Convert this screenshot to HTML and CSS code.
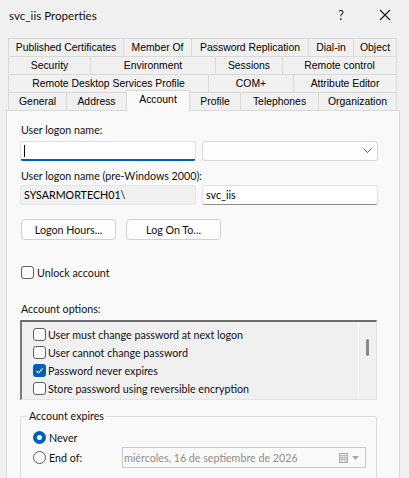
FILE: index.html
```html
<!DOCTYPE html>
<html lang="en">
<head>
    <meta charset="UTF-8">
    <meta name="viewport" content="width=device-width, initial-scale=1.0">
    <title>svc_iis Properties</title>
    <link rel="stylesheet" href="styles.css">
</head>
<body>
    <div class="dialog">
        <div class="titlebar">
            <span class="title">svc_iis Properties</span>
            <span class="help">?</span>
            <span class="close">
                <svg width="12" height="12" viewBox="0 0 12 12"><path d="M1 1L11 11M11 1L1 11" stroke="#1b1b1b" stroke-width="1.1" fill="none"/></svg>
            </span>
        </div>

        <div class="tabs">
            <div class="tab-row row-1">
                <div class="tab">Published Certificates</div>
                <div class="tab">Member Of</div>
                <div class="tab">Password Replication</div>
                <div class="tab">Dial-in</div>
                <div class="tab">Object</div>
            </div>
            <div class="tab-row row-2">
                <div class="tab">Security</div>
                <div class="tab">Environment</div>
                <div class="tab">Sessions</div>
                <div class="tab">Remote control</div>
            </div>
            <div class="tab-row row-3">
                <div class="tab">Remote Desktop Services Profile</div>
                <div class="tab">COM+</div>
                <div class="tab">Attribute Editor</div>
            </div>
            <div class="tab-row row-4">
                <div class="tab">General</div>
                <div class="tab">Address</div>
                <div class="tab active">Account</div>
                <div class="tab">Profile</div>
                <div class="tab">Telephones</div>
                <div class="tab">Organization</div>
            </div>
        </div>

        <div class="panel">
            <div class="label">User logon name:</div>
            <div class="field-row">
                <div class="textbox focused"><span class="caret"></span></div>
                <div class="combo">
                    <svg width="9" height="6" viewBox="0 0 9 6"><path d="M0.5 0.5L4.5 4.5L8.5 0.5" stroke="#5c5c5c" stroke-width="1" fill="none"/></svg>
                </div>
            </div>

            <div class="label label-2">User logon name (pre-Windows 2000):</div>
            <div class="field-row row-pre">
                <div class="textbox readonly">SYSARMORTECH01\</div>
                <div class="textbox">svc_iis</div>
            </div>

            <div class="buttons">
                <button class="btn">Logon Hours...</button>
                <button class="btn">Log On To...</button>
            </div>

            <div class="check-row unlock">
                <span class="check"></span>
                <span>Unlock account</span>
            </div>

            <div class="label options-label">Account options:</div>
            <div class="listbox">
                <div class="options">
                    <div class="check-row item"><span class="check"></span><span>User must change password at next logon</span></div>
                    <div class="check-row item"><span class="check"></span><span>User cannot change password</span></div>
                    <div class="check-row item">
                        <span class="check checked">
                            <svg width="13" height="13" viewBox="0 0 13 13"><path d="M3.5 6.8L5.6 8.8L9.6 4.4" stroke="#fff" stroke-width="1.1" fill="none"/></svg>
                        </span>
                        <span>Password never expires</span>
                    </div>
                    <div class="check-row item"><span class="check"></span><span>Store password using reversible encryption</span></div>
                </div>
                <div class="scroll"><span class="thumb"></span></div>
            </div>

            <fieldset class="expires">
                <legend>Account expires</legend>
                <div class="radio-row">
                    <span class="radio on"></span>
                    <span>Never</span>
                </div>
                <div class="radio-row end-row">
                    <span class="radio"></span>
                    <span class="end-label">End of:</span>
                    <div class="datepicker">
                        <span>miércoles, 16 de septiembre de 2026</span>
                        <span class="picker-icons">
                            <svg width="9" height="10" viewBox="0 0 9 10">
                                <rect x="0.5" y="0.5" width="8" height="9" fill="#f4f4f4" stroke="#a8a8a8"/>
                                <path d="M0.5 2.5H8.5M0.5 4.5H8.5M0.5 6.5H8.5M3 2.5V9.5M6 2.5V9.5" stroke="#b8b8b8" stroke-width="1" fill="none"/>
                            </svg>
                            <svg width="7" height="4" viewBox="0 0 7 4"><path d="M0 0H7L3.5 4Z" fill="#a8a8a8"/></svg>
                        </span>
                    </div>
                </div>
            </fieldset>
        </div>
    </div>
</body>
</html>
```
FILE: styles.css
```css
body {
    margin: 0;
    width: 409px;
    height: 478px;
    overflow: hidden;
    background-color: #f0f0f0;
    font-family: Lato, "Noto Sans", sans-serif;
    font-size: 10.7px;
    color: #111;
}

.titlebar {
    height: 30px;
    display: flex;
    align-items: center;
    padding-left: 9px;
}

.title {
    flex: 1;
    font-size: 11.6px;
}

.help {
    font-size: 12.5px;
    width: 14px;
    margin-right: 31px;
    text-align: center;
}

.close {
    display: flex;
    margin-right: 18px;
}

/* tab strip: four stacked rows, widths fixed per row */
.tabs {
    margin: 8px 0 0 8px;
    width: 389px;
    font-family: "Liberation Sans", Arial, sans-serif;
    font-size: 10.4px;
    color: #000;
}

.tab-row {
    display: grid;
    height: 18px;
}

.row-1 { grid-template-columns: 115px 68px 117px 45px 44px; }
.row-2 { grid-template-columns: 82px 125px 67px 115px; }
.row-3 { grid-template-columns: 200px 85px 104px; }
.row-4 { grid-template-columns: 58px 60px 64px 50px 78px 79px; }

.tab {
    height: 18px;
    box-sizing: border-box;
    border-top: 1px solid #d9d9d9;
    border-left: 1px solid #d9d9d9;
    text-align: center;
    line-height: 17px;
    white-space: nowrap;
    background-color: #f0f0f0;
}

.tab:last-child {
    border-right: 1px solid #d9d9d9;
}

.tab.active {
    position: relative;
    top: -2px;
    height: 21px;
    z-index: 1;
    background-color: #f9f9f9;
    border-right: 1px solid #d9d9d9;
    line-height: 18px;
}

.tab.active + .tab {
    border-left: none;
}

/* the page runs on below the window, so no bottom edge */
.panel {
    margin-left: 6px;
    width: 394px;
    height: 368px;
    box-sizing: border-box;
    border: 1px solid #d9d9d9;
    border-bottom: none;
    background-color: #f9f9f9;
    padding: 12px 0 0 13px;
}

.label {
    line-height: 14px;
    padding-left: 1px;
}

.label-2 {
    margin-top: 8px;
}

.field-row {
    display: flex;
    gap: 6px;
    margin-top: 4px;
}

.row-pre {
    margin-top: 2px;
}

.textbox, .combo {
    width: 176px;
    height: 20px;
    box-sizing: border-box;
    border: 1px solid #e3e3e3;
    border-bottom-color: #8d8d8d;
    border-radius: 3px;
    background-color: #fff;
    padding-left: 3px;
    line-height: 18px;
    color: #000;
}

.textbox.focused {
    border-bottom: 2px solid #005fb8;
}

.caret {
    display: inline-block;
    width: 1px;
    height: 12px;
    margin-top: 3px;
    background-color: #000;
    vertical-align: top;
}

.textbox.readonly {
    background-color: #f0f0f0;
    border-color: #e5e5e5;
}

.combo {
    display: flex;
    justify-content: flex-end;
    align-items: center;
    padding-right: 5px;
    border-color: #d6d6d6;
    background-color: #fdfdfd;
}

.buttons {
    display: flex;
    gap: 10px;
    margin-top: 14px;
    padding-left: 1px;
}

.btn {
    width: 95px;
    height: 21px;
    border: 1px solid #d0d0d0;
    border-radius: 4px;
    background-color: #fdfdfd;
    font: inherit;
    color: #111;
    padding: 0;
}

.check-row {
    display: flex;
    align-items: center;
    gap: 3px;
    height: 14px;
}

.unlock {
    margin-top: 25px;
    padding-left: 1px;
}

.check {
    width: 13px;
    height: 13px;
    box-sizing: border-box;
    border: 1px solid #5d5d5d;
    border-radius: 3px;
    background-color: #fbfbfb;
    flex-shrink: 0;
}

.check.checked {
    border: none;
    background-color: #005fb8;
    display: flex;
}

.options-label {
    margin-top: 23px;
}

.listbox {
    margin-top: 4px;
    width: 357px;
    height: 80px;
    box-sizing: border-box;
    border-top: 2px solid #6d6d6d;
    border-left: 2px solid #7a7a7a;
    border-right: 1px solid #e3e3e3;
    border-bottom: 1px solid #e3e3e3;
    background-color: #f0f0f0;
    display: flex;
}

.options {
    flex: 1;
    padding: 3px 0 0 11px;
}

.check-row.item {
    height: 18px;
    gap: 2px;
}

.scroll {
    width: 17px;
    border-left: 1px solid #fafafa;
    position: relative;
}

/* scroll thumb sits on the track */
.thumb {
    position: absolute;
    left: 7px;
    top: 17px;
    width: 3px;
    height: 17px;
    border-radius: 2px;
    background-color: #8a8a8a;
}

.expires {
    margin: 9px 0 0 0;
    width: 357px;
    height: 70px;
    box-sizing: border-box;
    border: 1px solid #dcdcdc;
    border-bottom: none;
    border-radius: 3px 3px 0 0;
    padding: 7px 0 0 12px;
}

.expires legend {
    margin-left: -6px;
    padding: 0 2px;
    line-height: 14px;
}

.radio-row {
    display: flex;
    align-items: center;
    gap: 3px;
    height: 14px;
}

.end-row {
    height: 21px;
    margin-top: 3px;
}

.radio {
    width: 13px;
    height: 13px;
    box-sizing: border-box;
    border: 1px solid #5d5d5d;
    border-radius: 50%;
    background-color: #fbfbfb;
    flex-shrink: 0;
}

.radio.on {
    border: 4px solid #005fb8;
    background-color: #fff;
}

.end-label {
    width: 70px;
}

.datepicker {
    width: 244px;
    height: 21px;
    box-sizing: border-box;
    border: 1px solid #c8c8c8;
    background-color: #f9f9f9;
    color: #8d8d8d;
    display: flex;
    align-items: center;
    justify-content: space-between;
    padding: 0 6px 0 1px;
}

.picker-icons {
    display: flex;
    align-items: center;
    gap: 4px;
}
```
